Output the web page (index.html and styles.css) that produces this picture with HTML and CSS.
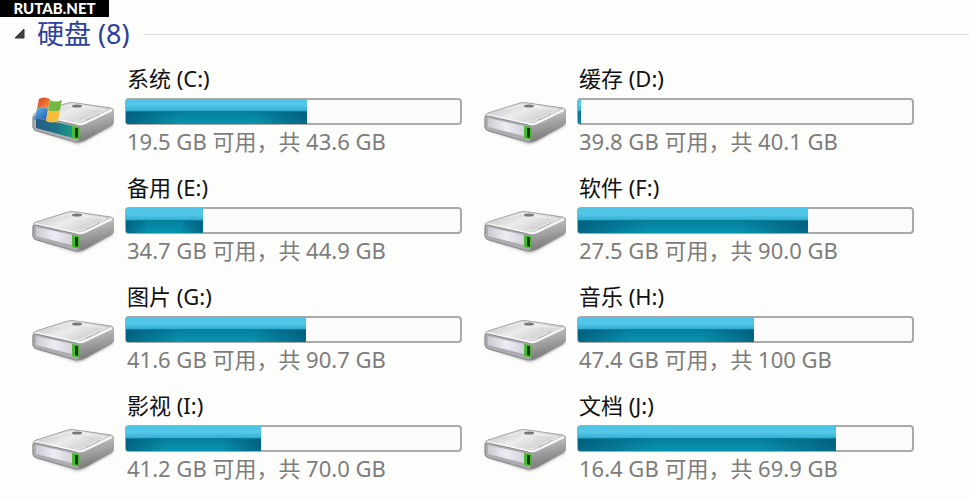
FILE: index.html
```html
<!DOCTYPE html>
<html lang="zh-CN">
<head>
<meta charset="utf-8">
<title>硬盘</title>
<link rel="stylesheet" href="styles.css">
</head>
<body>

  <!-- shared icon shapes -->
  <svg class="defs" aria-hidden="true">
    <defs>
      <linearGradient id="top" x1="0" y1="0" x2="1" y2="0.6">
        <stop offset="0" stop-color="#bdbdbd"/>
        <stop offset="0.5" stop-color="#ececec"/>
        <stop offset="1" stop-color="#c4c4c4"/>
      </linearGradient>
      <linearGradient id="side" x1="0" y1="0" x2="0.4" y2="1">
        <stop offset="0" stop-color="#f6f6f6"/>
        <stop offset="0.45" stop-color="#c4c4c4"/>
        <stop offset="1" stop-color="#808080"/>
      </linearGradient>
      <linearGradient id="front" x1="0" y1="0" x2="1" y2="0">
        <stop offset="0" stop-color="#c9cbd2"/>
        <stop offset="0.5" stop-color="#eeedf6"/>
        <stop offset="1" stop-color="#d4d3dc"/>
      </linearGradient>
      <linearGradient id="glass" x1="0" y1="0" x2="1" y2="0">
        <stop offset="0" stop-color="#275a86"/>
        <stop offset="0.5" stop-color="#1c7187"/>
        <stop offset="1" stop-color="#1d9b88"/>
      </linearGradient>
      <linearGradient id="red" x1="0" y1="0" x2="1" y2="1">
        <stop offset="0" stop-color="#d33a16"/>
        <stop offset="1" stop-color="#f79a45"/>
      </linearGradient>
      <linearGradient id="blue" x1="0" y1="0" x2="1" y2="1">
        <stop offset="0" stop-color="#63b6ec"/>
        <stop offset="1" stop-color="#1c5da8"/>
      </linearGradient>
      <filter id="soft" x="-10%" y="-30%" width="120%" height="160%">
        <feGaussianBlur stdDeviation="1.5"/>
      </filter>

      <symbol id="case" viewBox="0 0 84 50">
        <path d="M5 34 L47 48 L54 46 L84 29 L80 25 L40 38 Z" fill="#666" opacity="0.5" filter="url(#soft)"/>
        <path d="M3 21 Q3 18 6 17 L38 7 Q42 6 46 7 L81 12 Q84 13 84 16 L84 25 Q84 28 81 30 L56 44 Q51 47 46 46 L7 35 Q3 34 3 31 Z" fill="url(#side)" stroke="#a3a3a3"/>
        <path d="M5 19 L39 8 Q43 7 47 8 L82 13 L55 27 Q51 29 47 28 Z" fill="url(#top)"/>
        <path d="M25 13 L39 9 L75 14 L52 25 Q49 26 45 25" fill="none" stroke="#fff" stroke-width="1" opacity="0.5"/>
        <path d="M69 17 Q67 21 56 24" fill="none" stroke="#aaa" stroke-width="1"/>
        <ellipse cx="47" cy="10" rx="5" ry="1.5" fill="#777"/>
        <path d="M5 19 L47 28 Q51 29 55 27 L82 14" fill="none" stroke="#f8f8f8" stroke-width="2"/>
        <path d="M3 22 Q3 20 6 20 L46 29 Q49 30 49 33 L49 43 Q49 46 46 46 L7 35 Q3 34 3 31 Z" fill="#adadb1" stroke="#8a8a8d"/>
      </symbol>
      <symbol id="led" viewBox="0 0 84 50">
        <path d="M42 30 L49 31 L49 42 Q48 44 45 43 L42 42 Z" fill="#4aba2e"/>
        <path d="M45 32 L48 32 L48 42 L45 41 Z" fill="#123b12"/>
      </symbol>
      <symbol id="drive" viewBox="0 0 84 50">
        <use href="#case"/>
        <path d="M6 22 L42 30 L42 40 L6 31 Z" fill="url(#front)"/>
        <use href="#led"/>
      </symbol>
      <symbol id="system-drive" viewBox="0 0 84 50">
        <use href="#case"/>
        <path d="M6 22 L43 30 L43 42 L6 32 Z" fill="url(#glass)"/>
        <use href="#led"/>
        <path d="M9 3 Q14 0 20 3 L18 13 Q12 10 7 13 Z" fill="url(#red)"/>
        <path d="M20 4 Q26 7 32 4 L30 14 Q25 17 18 14 Z" fill="#72b843"/>
        <path d="M7 13 Q12 10 18 13 L16 24 Q10 21 4 24 Z" fill="url(#blue)"/>
        <path d="M18 14 Q24 17 30 14 L28 25 Q22 28 16 25 Z" fill="#f8bd3c"/>
      </symbol>
    </defs>
  </svg>

  <div class="watermark">RUTAB.NET</div>

  <h1 class="group-title">
    <button type="button" class="toggle" aria-expanded="true" aria-controls="drives">
      <svg class="arrow" viewBox="0 0 12 12" aria-hidden="true"><path d="M10 1 L10 10 L1 10 Z" fill="#444" stroke="#333"/></svg>
      <span>硬盘 (8)</span>
    </button>
  </h1>

  <main class="drives" id="drives">
    <section class="drive">
      <svg class="icon" aria-hidden="true"><use href="#system-drive"/></svg>
      <div class="info">
        <h2 class="name">系统 (C:)</h2>
        <div class="bar"><div class="used" style="width: 54.5%"></div></div>
        <p class="space">19.5 GB 可用，共 43.6 GB</p>
      </div>
    </section>
    <section class="drive">
      <svg class="icon" aria-hidden="true"><use href="#drive"/></svg>
      <div class="info">
        <h2 class="name">缓存 (D:)</h2>
        <div class="bar"><div class="used" style="width: 1%"></div></div>
        <p class="space">39.8 GB 可用，共 40.1 GB</p>
      </div>
    </section>
    <section class="drive">
      <svg class="icon" aria-hidden="true"><use href="#drive"/></svg>
      <div class="info">
        <h2 class="name">备用 (E:)</h2>
        <div class="bar"><div class="used" style="width: 23%"></div></div>
        <p class="space">34.7 GB 可用，共 44.9 GB</p>
      </div>
    </section>
    <section class="drive">
      <svg class="icon" aria-hidden="true"><use href="#drive"/></svg>
      <div class="info">
        <h2 class="name">软件 (F:)</h2>
        <div class="bar"><div class="used" style="width: 69%"></div></div>
        <p class="space">27.5 GB 可用，共 90.0 GB</p>
      </div>
    </section>
    <section class="drive">
      <svg class="icon" aria-hidden="true"><use href="#drive"/></svg>
      <div class="info">
        <h2 class="name">图片 (G:)</h2>
        <div class="bar"><div class="used" style="width: 54%"></div></div>
        <p class="space">41.6 GB 可用，共 90.7 GB</p>
      </div>
    </section>
    <section class="drive">
      <svg class="icon" aria-hidden="true"><use href="#drive"/></svg>
      <div class="info">
        <h2 class="name">音乐 (H:)</h2>
        <div class="bar"><div class="used" style="width: 53%"></div></div>
        <p class="space">47.4 GB 可用，共 100 GB</p>
      </div>
    </section>
    <section class="drive">
      <svg class="icon" aria-hidden="true"><use href="#drive"/></svg>
      <div class="info">
        <h2 class="name">影视 (I:)</h2>
        <div class="bar"><div class="used" style="width: 40.6%"></div></div>
        <p class="space">41.2 GB 可用，共 70.0 GB</p>
      </div>
    </section>
    <section class="drive">
      <svg class="icon" aria-hidden="true"><use href="#drive"/></svg>
      <div class="info">
        <h2 class="name">文档 (J:)</h2>
        <div class="bar"><div class="used" style="width: 77.4%"></div></div>
        <p class="space">16.4 GB 可用，共 69.9 GB</p>
      </div>
    </section>
  </main>

</body>
</html>
```
FILE: styles.css
```css
* {
  box-sizing: border-box;
}

body {
  margin: 0;
  padding-top: 16px;
  background: #fdfdfc;
  font-family: "Noto Sans", "Noto Sans CJK SC", sans-serif;
  font-size: 22px;
}

.defs {
  position: absolute;
  width: 0;
  height: 0;
}

.watermark {
  position: absolute;
  top: 0;
  left: 0;
  width: 109px;
  height: 17px;
  background: #000;
  color: #fff;
  font-family: Lato, "Liberation Sans", sans-serif;
  font-size: 15px;
  font-weight: 900;
  line-height: 17px;
  text-align: center;
}

.group-title {
  display: flex;
  align-items: center;
  gap: 14px;
  margin: 0 0 12px;
  padding-left: 14px;
  font-weight: normal;
}

/* rule that runs to the window edge */
.group-title::after {
  content: "";
  flex: 1;
  height: 1px;
  background: #dcdcdc;
}

.toggle {
  display: flex;
  align-items: center;
  gap: 11px;
  padding: 0;
  border: 0;
  background: none;
  color: #2c3f9c;
  font-family: inherit;
  font-size: 27px;
  line-height: 36px;
}

.arrow {
  width: 12px;
  height: 12px;
}

.drives {
  display: grid;
  grid-template-columns: 1fr 1fr;
  gap: 18px 20px;
  padding: 0 55px 0 30px;
}

.drive {
  display: flex;
  gap: 11px;
}

.icon {
  flex: none;
  width: 84px;
  height: 50px;
  margin-top: 32px;
}

.info {
  flex: 1;
  min-width: 0;
}

.name,
.space {
  margin: 0;
  padding-left: 2px;
  font-size: 22px;
  font-weight: normal;
  line-height: 28px;
  white-space: nowrap;
}

.name {
  color: #111;
}

.space {
  color: #7c7c7c;
}

.bar {
  height: 27px;
  margin: 6px 0 2px;
  border: 2px solid #a9a9a9;
  border-radius: 4px;
  background: #fbfbfb;
}

/* sits over the inner half of the bar's border */
.used {
  height: 25px;
  margin: -1px;
  border-radius: 2px 0 0 2px;
  background:
    linear-gradient(to right, rgba(0, 60, 95, 0.5), transparent 30%, transparent 70%, rgba(0, 60, 95, 0.5)) bottom / 100% 50% no-repeat,
    linear-gradient(#4cc4e6, #55c8e8 25%, #2fabd0 50%, #067f9c 50%, #0794b0);
}
```
